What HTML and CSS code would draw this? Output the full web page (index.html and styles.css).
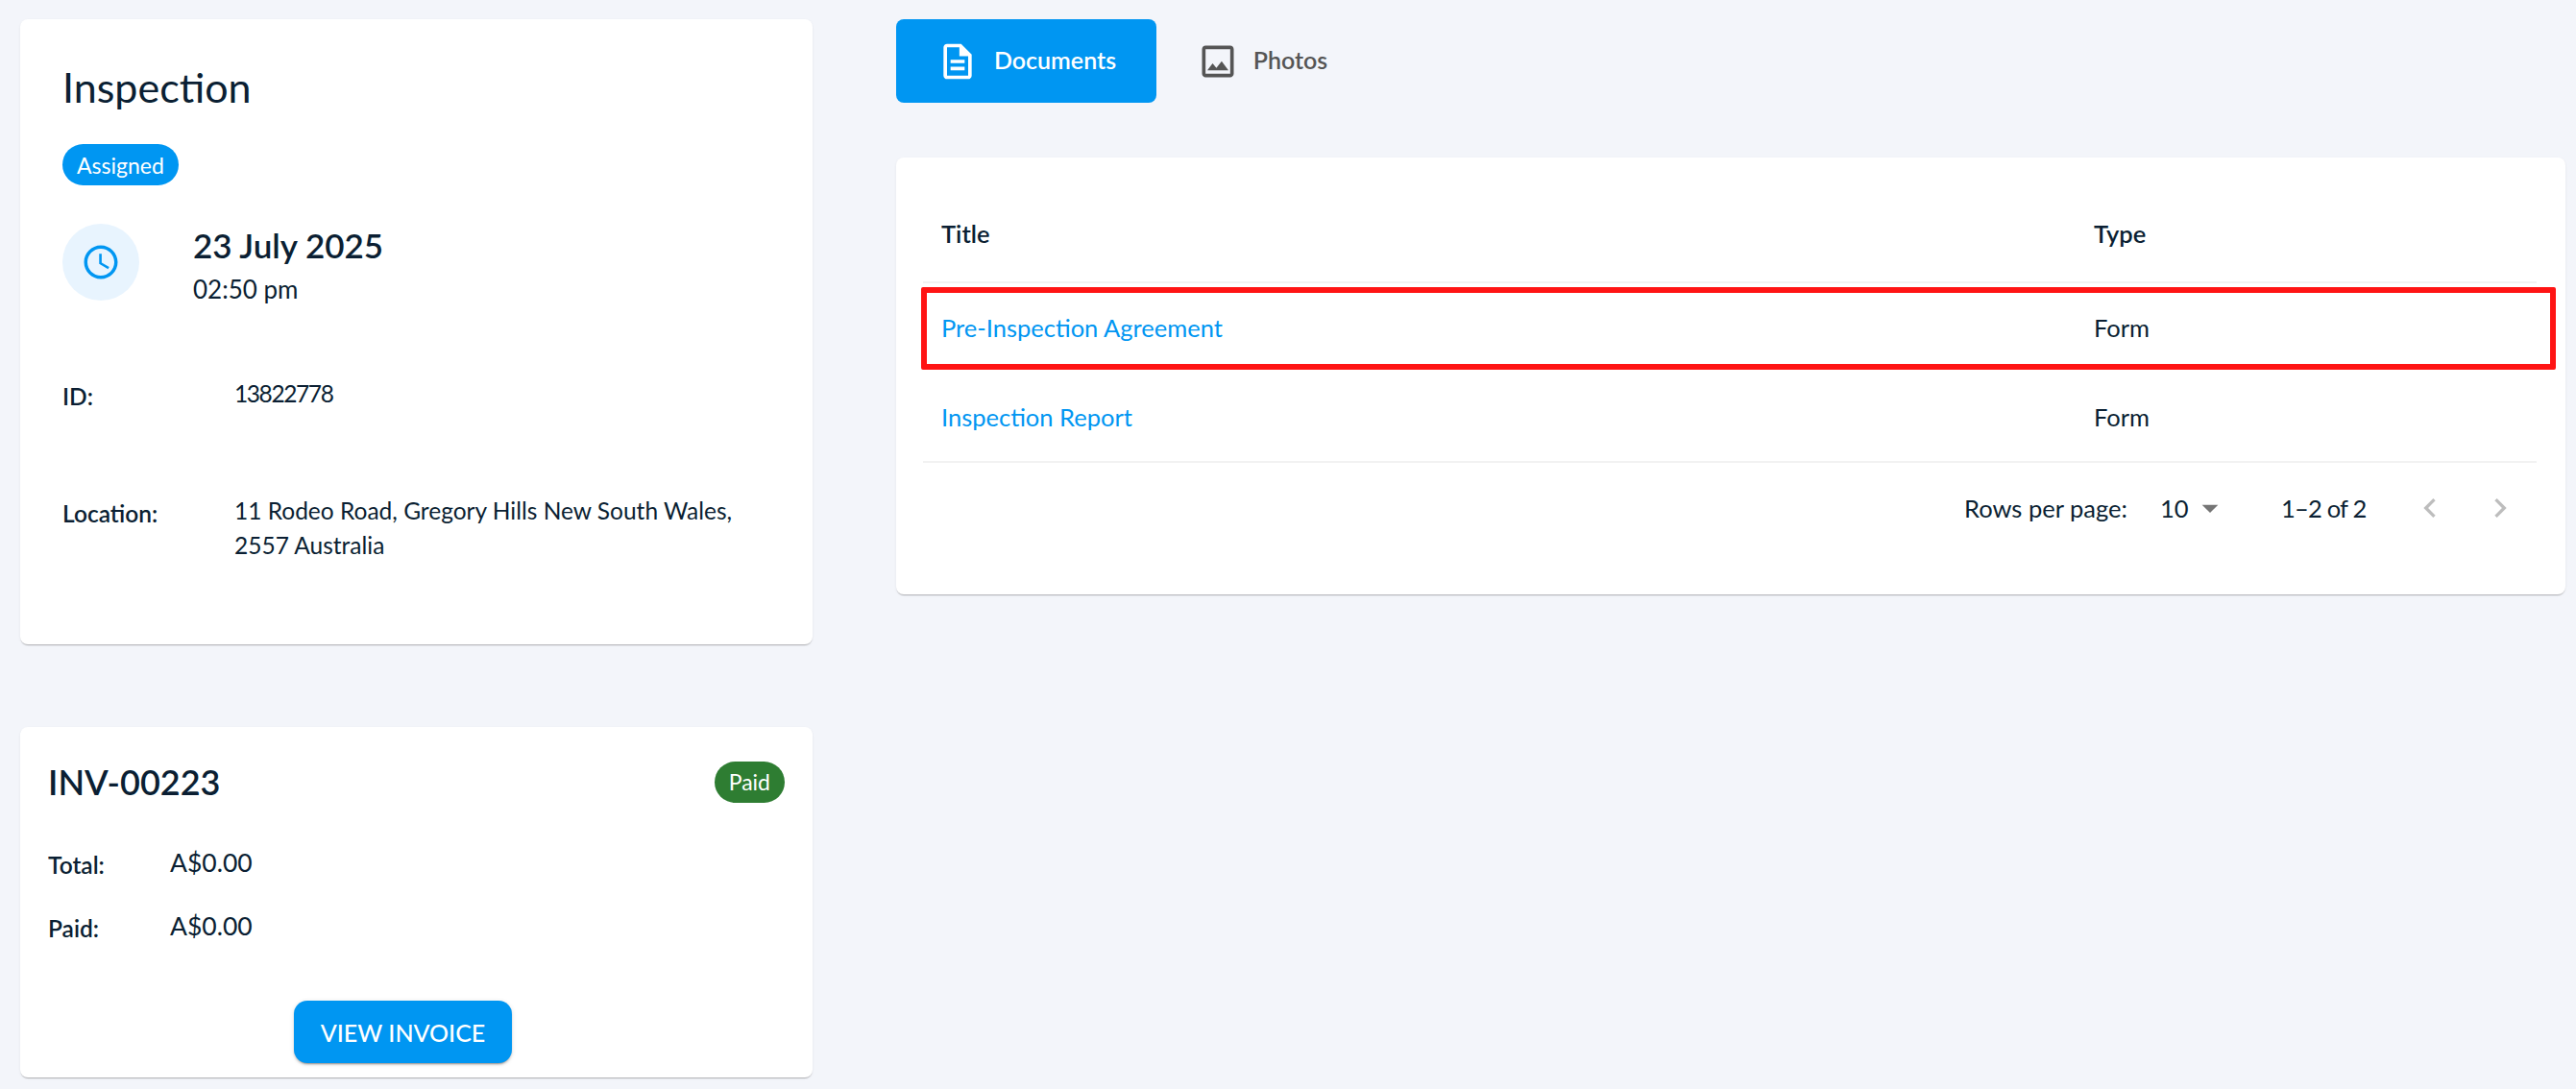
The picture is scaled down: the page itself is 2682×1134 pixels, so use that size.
FILE: index.html
```html
<!DOCTYPE html>
<html lang="en">
<head>
<meta charset="utf-8">
<title>Inspection</title>
<link rel="stylesheet" href="styles.css">
</head>
<body>
<div class="page">
  <aside class="side">
    <section class="card inspection">
      <h1 class="insp-title">Inspection</h1>
      <div class="badges"><span class="badge badge-blue">Assigned</span></div>
      <div class="when">
        <span class="clock">
          <svg width="42" height="42" viewBox="0 0 24 24"><path fill="#0096f2" d="M11.99 2C6.47 2 2 6.48 2 12s4.47 10 9.99 10C17.52 22 22 17.52 22 12S17.52 2 11.99 2zM12 20c-4.42 0-8-3.58-8-8s3.58-8 8-8 8 3.58 8 8-3.58 8-8 8zm.5-13H11v6l5.25 3.15.75-1.23-4.5-2.67z"/></svg>
        </span>
        <div class="when-text">
          <div class="date">23 July 2025</div>
          <div class="time">02:50 pm</div>
        </div>
      </div>
      <dl class="facts">
        <dt>ID:</dt><dd class="fact-num">13822778</dd>
        <dt>Location:</dt><dd>11 Rodeo Road, Gregory Hills New South Wales, 2557 Australia</dd>
      </dl>
    </section>
    <section class="card invoice">
      <div class="inv-head">
        <h2 class="inv-title">INV-00223</h2>
        <span class="badge badge-green">Paid</span>
      </div>
      <dl class="inv-facts">
        <dt>Total:</dt><dd>A$0.00</dd>
        <dt>Paid:</dt><dd>A$0.00</dd>
      </dl>
      <div class="inv-action"><button class="btn" type="button">VIEW INVOICE</button></div>
    </section>
  </aside>
  <main class="main">
    <nav class="tabs">
      <a class="tab tab-active">
        <svg width="44" height="44" viewBox="0 0 24 24"><path fill="#fff" d="M14 2H6c-1.1 0-1.99.9-1.99 2L4 20c0 1.1.89 2 1.99 2H18c1.1 0 2-.9 2-2V8l-6-6zm4 18H6V4h7v5h5v11zM8 15h8v2H8zm0-4h8v2H8z"/></svg>
        <span class="tab-text">Documents</span>
      </a>
      <a class="tab tab-plain">
        <svg width="44" height="44" viewBox="0 0 24 24"><path fill="#555" d="M19 5v14H5V5h14m0-2H5c-1.1 0-2 .9-2 2v14c0 1.1.9 2 2 2h14c1.1 0 2-.9 2-2V5c0-1.1-.9-2-2-2zm-4.86 8.86-3 3.87L9 13.14 6 17h12l-3.86-5.14z"/></svg>
        <span class="tab-text">Photos</span>
      </a>
    </nav>
    <section class="card docs">
      <table class="table">
        <thead>
          <tr><th>Title</th><th>Type</th></tr>
        </thead>
        <tbody>
          <tr class="row-marked"><td><a class="link">Pre-Inspection Agreement</a></td><td>Form</td></tr>
          <tr><td><a class="link">Inspection Report</a></td><td>Form</td></tr>
        </tbody>
      </table>
      <div class="mark"></div>
      <div class="pager">
        <span class="pager-label">Rows per page:</span>
        <span class="pager-select">10
          <svg class="caret" width="40" height="40" viewBox="0 0 24 24"><path fill="#757575" d="M7 10l5 5 5-5z"/></svg>
        </span>
        <span class="pager-count">1–2 of 2</span>
        <span class="pager-nav">
          <svg width="40" height="40" viewBox="0 0 24 24"><path fill="#bdbdbd" d="M15.41 7.41 14 6l-6 6 6 6 1.41-1.41L10.83 12z"/></svg>
          <svg width="40" height="40" viewBox="0 0 24 24"><path fill="#bdbdbd" d="M10 6 8.59 7.41 13.17 12l-4.58 4.59L10 18l6-6z"/></svg>
        </span>
      </div>
    </section>
  </main>
</div>
</body>
</html>
```

FILE: styles.css
```css
* { box-sizing: border-box; }
html, body { margin: 0; height: 100%; }
body {
  background: #f3f5fa;
  color: #0b1f33;
  font-family: "Lato", "Noto Sans", sans-serif;
  font-size: 24.5px;
  overflow: hidden;
}
.page {
  display: grid;
  grid-template-columns: 825px 1738px;
  column-gap: 87px;
  padding: 20px 11px 0 21px;
  align-items: start;
}
.side { display: flex; flex-direction: column; gap: 86px; }
.card {
  background: #fff;
  border-radius: 8px;
  box-shadow: 0 2px 1px -1px rgba(0,0,0,.2), 0 1px 1px 0 rgba(0,0,0,.06), 0 1px 3px 0 rgba(0,0,0,.06);
}
.inspection { height: 651px; padding: 44px 44px 0; }
.insp-title { margin: 0; font-size: 43px; font-weight: 400; line-height: 54px; }
.badges { margin-top: 32px; display: flex; }
.badge {
  display: inline-flex;
  align-items: center;
  color: #fff;
  font-size: 23px;
  border-radius: 22px;
  height: 43px;
}
.badge-blue { background: #0096f2; padding: 0 15px; }
.badge-green { background: #2e7d32; padding: 0 15px; }
.when { display: flex; margin-top: 40px; gap: 56px; }
.clock {
  width: 80px;
  height: 80px;
  flex: none;
  border-radius: 50%;
  background: #e8f4fe;
  display: flex;
  align-items: center;
  justify-content: center;
}
.date { font-size: 35px; font-weight: 600; line-height: 44px; }
.time { font-size: 26px; line-height: 36px; margin-top: 6px; }
.facts {
  margin: 73px 0 0;
  display: grid;
  grid-template-columns: 179px 1fr;
  row-gap: 83px;
}
.facts dt { font-weight: 600; line-height: 36px; padding-top: 3px; }
.facts dd { margin: 0; line-height: 36px; }
.facts .fact-num { letter-spacing: -1.4px; }
.invoice { height: 365px; padding: 35px 29px 0; }
.inv-head { display: flex; justify-content: space-between; align-items: center; height: 44px; }
.inv-title { margin: 0; font-size: 36px; font-weight: 600; }
.inv-facts {
  margin: 44px 0 0;
  display: grid;
  grid-template-columns: 127px 1fr;
  row-gap: 27px;
}
.inv-facts dt { font-weight: 600; line-height: 36px; padding-top: 3px; }
.inv-facts dd { margin: 0; line-height: 36px; font-size: 26.5px; }
.inv-action { display: flex; justify-content: center; margin-top: 57px; padding-right: 28px; }
.btn {
  width: 227px;
  height: 65px;
  border: 0;
  border-radius: 14px;
  background: #0096f2;
  color: #fff;
  font: 500 25px "Lato", "Noto Sans", sans-serif;
  box-shadow: 0 3px 1px -2px rgba(0,0,0,.2), 0 2px 2px 0 rgba(0,0,0,.14), 0 1px 5px 0 rgba(0,0,0,.12);
}
.tabs { display: flex; height: 87px; }
.tab {
  display: flex;
  align-items: center;
  justify-content: center;
  gap: 16px;
  border-radius: 8px;
  color: #555;
  font-size: 25px;
  font-weight: 600;
}
.tab-text { padding-bottom: 3px; }
.tab-active { background: #0096f2; color: #fff; width: 271px; }
.tab-plain { width: 220px; gap: 15px; }
.docs { position: relative; margin-top: 57px; height: 455px; padding: 29px 30px 0 28px; }
.table { width: 100%; table-layout: fixed; border-collapse: collapse; font-size: 25.5px; }
.table th, .table td { text-align: left; padding: 0 0 0 19px; border-bottom: 2px solid #f2f2f2; }
.table th { height: 101px; font-weight: 600; }
.table td { height: 94px; }
.table tbody tr:first-child td { border-bottom: 0; height: 93px; }
.table th:first-child, .table td:first-child { width: 1200px; }
.link { color: #0096f2; }
.mark {
  position: absolute;
  left: 26px;
  top: 135px;
  width: 1702px;
  height: 86px;
  border: 6px solid #ff1414;
  border-radius: 2px;
  pointer-events: none;
}
.pager { display: flex; align-items: center; height: 93px; font-size: 25.5px; padding-left: 1084px; }
.pager-label { width: 204px; }
.pager-select { display: flex; align-items: center; width: 126px; }
.caret { margin-left: 2px; }
.pager-count { width: 135px; letter-spacing: -0.8px; }
.pager-nav { display: flex; gap: 33px; }
```
